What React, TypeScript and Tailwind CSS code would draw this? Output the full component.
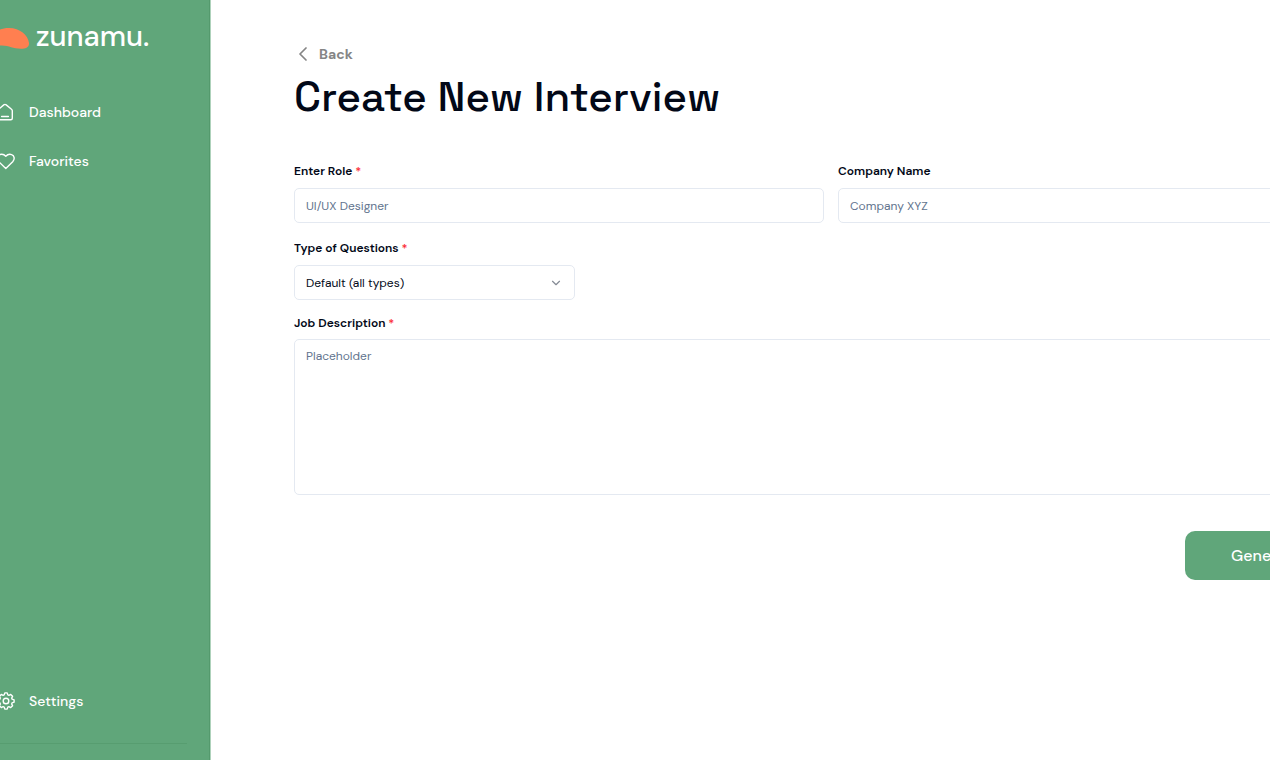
import type { ReactNode } from 'react';
import { ChevronDown, ChevronLeft } from 'lucide-react';

// Sidebar icons share the same outline look
function Icon({ children }: { children: ReactNode }) {
  return (
    <svg
      className="size-5 shrink-0"
      viewBox="0 0 20 20"
      fill="none"
      stroke="currentColor"
      strokeWidth="1.4"
      strokeLinecap="round"
      strokeLinejoin="round"
      aria-hidden="true"
    >
      {children}
    </svg>
  );
}

function NavLink({ label, children }: { label: string; children: ReactNode }) {
  return (
    <a href="#" className="flex h-[49px] items-center gap-[13px] text-sm font-medium text-white">
      <Icon>{children}</Icon>
      {label}
    </a>
  );
}

function Label({ htmlFor, required, children }: { htmlFor: string; required?: boolean; children: ReactNode }) {
  return (
    <label htmlFor={htmlFor} className="block text-xs leading-5 font-semibold">
      {children}
      {required && <span className="text-red-500"> *</span>}
    </label>
  );
}

function Sidebar() {
  return (
    <aside className="flex w-[236px] shrink-0 flex-col border-r border-[#549a6d] bg-[#60a67a] px-[22px] pb-4 shadow-[1px_0_0_#aed2bb]">
      {/* Logo */}
      <a href="#" className="mt-4 flex h-10 items-center gap-[7px] text-white">
        <svg className="h-[26px] w-[33px]" viewBox="0 0 33 26" aria-hidden="true">
          <path
            fill="#ff7f50"
            d="M0 11C1 7 6 5 13 5C24 5 32 12 33 20C33.4 24 30 25.8 25 25.8C16 25.8 13 22 4 22.6C0 22.8 -1 16 0 11Z"
          />
        </svg>
        <span className="text-[29px] leading-10 font-medium">zunamu.</span>
      </a>

      {/* Main links */}
      <nav className="mt-[31px]">
        <NavLink label="Dashboard">
          <path d="M1.8 8.8Q1.8 7.9 2.5 7.3L7.8 2.9Q9 1.9 10.2 2.9L15.5 7.3Q16.3 7.9 16.3 8.8V16.3Q16.3 17.8 14.8 17.8H3.3Q1.8 17.8 1.8 16.3ZM5.6 14.5H12.4" />
        </NavLink>
        <NavLink label="Favorites">
          <path d="M9.8 17.6L2.9 10.8C0.6 8.3 1 4.6 4 3.6C6.3 2.9 8.3 3.6 9.8 5.3C11.3 3.6 13.3 2.9 15.6 3.6C18.6 4.6 19 8.3 16.7 10.8Z" />
        </NavLink>
      </nav>

      <div className="mt-auto border-b border-[#579d70] pb-[18px]">
        <NavLink label="Settings">
          <path d="M8.8 1.9H11.2L11.8 3.9L12.9 4.3L14.7 3.4L16.6 5.3L15.7 7.1L16.1 8.2L18.1 8.8V11.2L16.1 11.8L15.7 12.9L16.6 14.7L14.7 16.6L12.9 15.7L11.8 16.1L11.2 18.1H8.8L8.2 16.1L7.1 15.7L5.3 16.6L3.4 14.7L4.3 12.9L3.9 11.8L1.9 11.2V8.8L3.9 8.2L4.3 7.1L3.4 5.3L5.3 3.4L7.1 4.3L8.2 3.9Z" />
          <circle cx="10" cy="10" r="2.8" />
        </NavLink>
      </div>
    </aside>
  );
}

const field = 'w-full rounded-[5px] border border-[#e4e9f1] bg-white px-[11px] text-xs placeholder:text-slate-500';

export default function App() {
  return (
    <div className="overflow-hidden bg-white font-['DM_Sans','Inter',sans-serif] text-[#020817]">
      <div className="-mr-[182px] -ml-[26px] flex min-h-screen">
        <Sidebar />

        <main className="min-w-0 flex-1 px-21 pt-11">
          <a href="#" className="flex h-5 w-fit items-center text-sm font-bold text-[#858585]">
            <ChevronLeft className="-ml-[3px] mr-1 size-6" strokeWidth={1.75} aria-hidden="true" />
            Back
          </a>
          <h1 className="font-['Space_Grotesk','Inter',sans-serif] text-[42px] leading-[66px] font-medium">
            Create New Interview
          </h1>

          <form className="mt-[31px]">
            <div className="grid grid-cols-2 gap-[14px]">
              <div>
                <Label htmlFor="role" required>Enter Role</Label>
                <input id="role" className={`${field} mt-[7px] h-[35px]`} placeholder="UI/UX Designer" />
              </div>
              <div>
                <Label htmlFor="company">Company Name</Label>
                <input id="company" className={`${field} mt-[7px] h-[35px]`} placeholder="Company XYZ" />
              </div>
            </div>

            <div className="mt-[15px]">
              <Label htmlFor="type" required>Type of Questions</Label>
              <div className="relative mt-[7px] w-[281px]">
                <select id="type" className={`${field} h-[35px] appearance-none`}>
                  <option>Default (all types)</option>
                </select>
                <ChevronDown className="pointer-events-none absolute top-[11px] right-3 size-[14px] text-[#858b95]" aria-hidden="true" />
              </div>
            </div>

            <div className="mt-[13px]">
              <Label htmlFor="description" required>Job Description</Label>
              <textarea
                id="description"
                className={`${field} mt-[6px] block h-[156px] resize-none py-[6px] leading-5`}
                placeholder="Placeholder"
              />
            </div>

            <div className="mt-9 flex justify-end">
              <button
                type="button"
                className="h-[49px] w-[183px] rounded-[10px] bg-[#60a67a] pl-[46px] text-left text-base font-medium text-white"
              >
                Generate
              </button>
            </div>
          </form>
        </main>
      </div>
    </div>
  );
}
